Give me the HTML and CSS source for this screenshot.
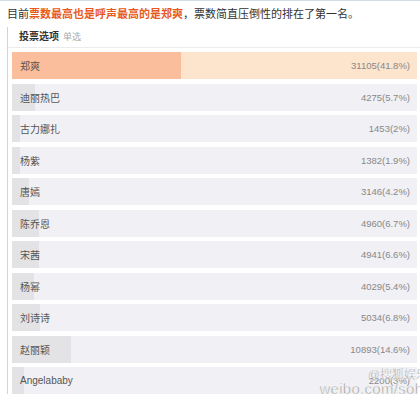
FILE: index.html
```html
<!DOCTYPE html>
<html>
<head>
	<meta charset="utf-8">
	<title>投票</title>
	<link rel="stylesheet" href="styles.css">
</head>
<body>
	<div class="intro">目前<em>票数最高也是呼声最高的是郑爽</em>，票数简直压倒性的排在了第一名。</div>
	<div class="panel">
		<div class="panel-head"><b>投票选项</b><span>单选</span></div>
		<ul class="options">
			<li class="opt top" style="--p:41.8%"><span>郑爽</span><i>31105(41.8%)</i></li>
			<li class="opt" style="--p:5.7%"><span>迪丽热巴</span><i>4275(5.7%)</i></li>
			<li class="opt" style="--p:2%"><span>古力娜扎</span><i>1453(2%)</i></li>
			<li class="opt" style="--p:1.9%"><span>杨紫</span><i>1382(1.9%)</i></li>
			<li class="opt" style="--p:4.2%"><span>唐嫣</span><i>3146(4.2%)</i></li>
			<li class="opt" style="--p:6.7%"><span>陈乔恩</span><i>4960(6.7%)</i></li>
			<li class="opt" style="--p:6.6%"><span>宋茜</span><i>4941(6.6%)</i></li>
			<li class="opt" style="--p:5.4%"><span>杨幂</span><i>4029(5.4%)</i></li>
			<li class="opt" style="--p:6.8%"><span>刘诗诗</span><i>5034(6.8%)</i></li>
			<li class="opt" style="--p:14.6%"><span>赵丽颖</span><i>10893(14.6%)</i></li>
			<li class="opt" style="--p:2.9%"><span>Angelababy</span><i>2200(3%)</i></li>
		</ul>
	</div>
	<!-- 水印 -->
	<div class="mark">
		<span class="mark-name">@搜狐娱乐</span>
		<span class="mark-url">weibo.com/sohu</span>
	</div>
</body>
</html>
```
FILE: styles.css
```css
html,body{
	height:100%;
}
body{
	margin:0;
	border-top:1px solid #d6dde6;
	background:#fff;
	font-family:"Liberation Sans","Noto Sans CJK SC",sans-serif;
	color:#333;
	overflow:hidden;
	position:relative;
}
.intro{
	padding-left:7px;
	height:26px;
	line-height:26px;
	font-size:11px;
	color:#333;
	white-space:nowrap;
}
.intro em{
	font-style:normal;
	font-weight:bold;
	color:#e85a1c;
}
.panel{
	margin-left:7px;
	border-left:1px solid #d3d3d3;
}
.panel-head{
	height:18px;
	padding:2px 0 0 11px;
	line-height:16px;
	border-bottom:1px solid #ececec;
	font-size:10px;
}
.panel-head b{
	color:#333;
}
.panel-head span{
	margin-left:4px;
	font-size:9px;
	color:#aaa;
}
.options{
	list-style:none;
	margin:0;
	padding:4px 3px 0 4px;
}
.opt{
	display:flex;
	justify-content:space-between;
	align-items:center;
	height:27px;
	margin-bottom:4.5px;
	padding:0 7px 0 8px;
	background:linear-gradient(to right,#e3e3e6 var(--p),#f1f0f4 var(--p));
}
.opt.top{
	background:linear-gradient(to right,#fbbe9c var(--p),#fde4cd var(--p));
}
.opt span{
	font-size:10px;
	color:#555;
}
.opt i{
	font-style:normal;
	font-size:9.5px;
	color:#888;
}
.mark{
	position:absolute;
	right:-12px;
	bottom:3px;
	display:flex;
	flex-direction:column;
	align-items:flex-end;
	color:#999;
	line-height:1;
}
.mark-name{
	font-size:12px;
	margin-right:4px;
	-webkit-text-stroke:0.3px #fff;
}
.mark-url{
	font-size:15px;
	letter-spacing:0.3px;
	-webkit-text-stroke:0.4px #fff;
}
```
